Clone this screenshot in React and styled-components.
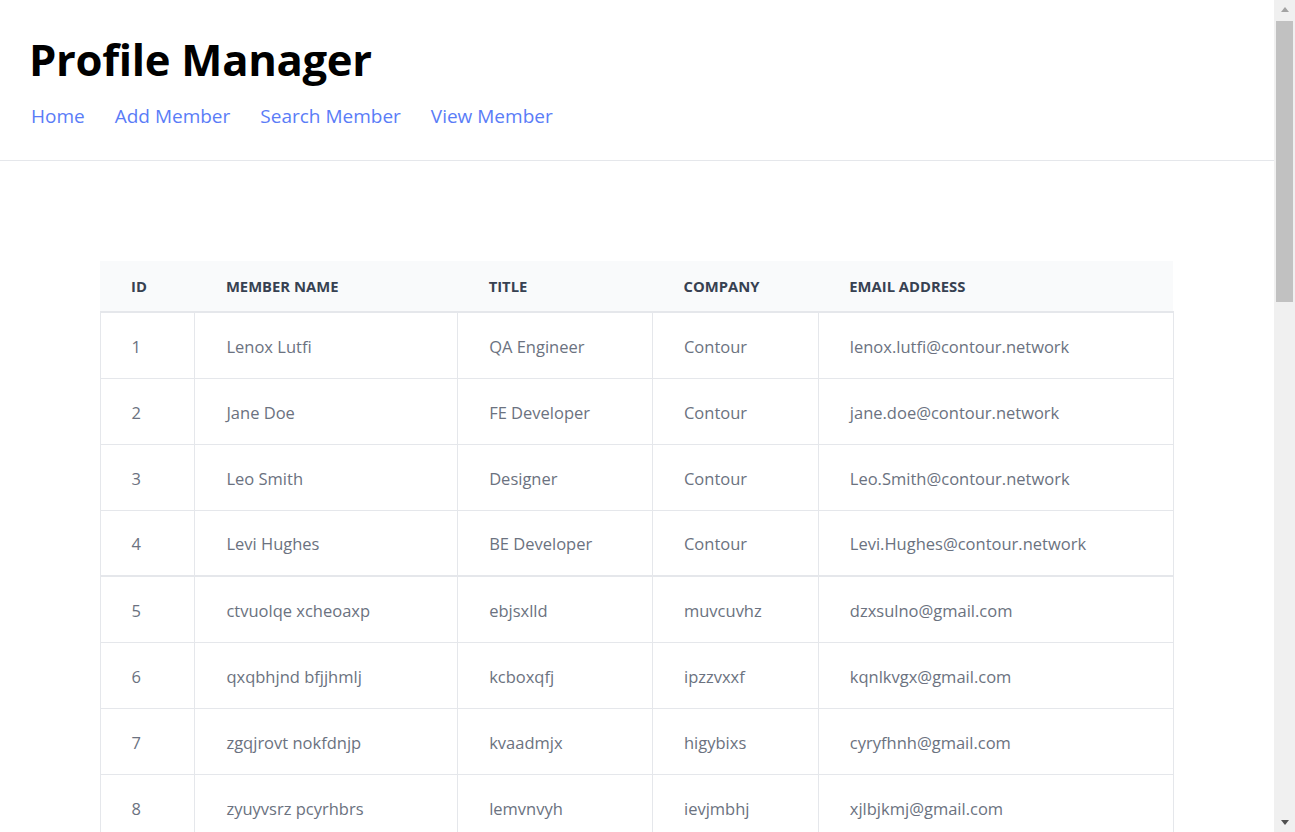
import React from 'react'
import styled, { createGlobalStyle } from 'styled-components'

const GlobalStyle = createGlobalStyle`
  html, body {
    margin: 0;
    padding: 0;
    background: #fff;
    font-family: "Open Sans", "Noto Sans", sans-serif;
  }
`

const Page = styled.div`
  display: flex;
  height: 100vh;
`

const Content = styled.div`
  flex: 1;
  min-width: 0;
  overflow: hidden;
`

const ScrollRail = styled.div`
  width: 21px;
  flex-shrink: 0;
  background: #f0f0f0;
  display: flex;
  flex-direction: column;
  align-items: center;
`

const ScrollButton = styled.div`
  height: 21px;
  width: 100%;
  display: flex;
  align-items: center;
  justify-content: center;
  margin-top: ${p => (p.$down ? 'auto' : '0')};

  &::after {
    content: '';
    width: 0;
    height: 0;
    border-left: 4.5px solid transparent;
    border-right: 4.5px solid transparent;
    ${p => (p.$down
      ? 'border-top: 5px solid #505050; margin-top: 2px;'
      : 'border-bottom: 5px solid #a3a3a3; margin-top: -3px;')}
  }
`

const Thumb = styled.div`
  width: 17px;
  height: 281px;
  background: #c1c1c1;
`

const Header = styled.header`
  padding: 30px 31px 0;
  height: 130px;
  border-bottom: 1px solid #e5e7eb;
`

const Title = styled.h1`
  margin: 0 0 0 -2px;
  font-size: 43.6px;
  line-height: 58px;
  font-weight: 700;
  color: #000;
  letter-spacing: -0.3px;
`

const Nav = styled.nav`
  display: flex;
  gap: 30px;
  margin-top: 14px;
`

const NavLink = styled.a`
  font-size: 19px;
  line-height: 28px;
  color: #5a7cf7;
  text-decoration: none;
  cursor: pointer;
`

const Main = styled.main`
  padding: 100px 0;
  display: flex;
  justify-content: center;
`

const Table = styled.table`
  width: 1074px;
  margin-left: -1px;
  border-collapse: collapse;
  font-size: 16px;
`

const HeadCell = styled.th`
  height: 51px;
  padding: 0 31px;
  text-align: left;
  font-size: 14.8px;
  font-weight: 700;
  color: #374151;
  background: #f9fafb;
  border-bottom: 2px solid #e5e7eb;
  width: ${p => p.$w}px;
  box-sizing: border-box;
`

const Row = styled.tr`
  border-bottom: ${p => (p.$split ? 2 : 1)}px solid #e5e7eb;
`

const Cell = styled.td`
  height: 66px;
  padding: 2px 31px 0;
  box-sizing: border-box;
  color: #6b7280;
  font-size: 16.5px;
  border-left: 1px solid #e5e7eb;
  border-right: 1px solid #e5e7eb;
  white-space: nowrap;
`

const columns = [
  { label: 'ID', w: 95 },
  { label: 'Member Name', w: 263 },
  { label: 'Title', w: 195 },
  { label: 'Company', w: 166 },
  { label: 'Email Address', w: 355 },
]

const members = [
  [1, 'Lenox Lutfi', 'QA Engineer', 'Contour', 'lenox.lutfi@contour.network'],
  [2, 'Jane Doe', 'FE Developer', 'Contour', 'jane.doe@contour.network'],
  [3, 'Leo Smith', 'Designer', 'Contour', 'Leo.Smith@contour.network'],
  [4, 'Levi Hughes', 'BE Developer', 'Contour', 'Levi.Hughes@contour.network'],
  [5, 'ctvuolqe xcheoaxp', 'ebjsxlld', 'muvcuvhz', 'dzxsulno@gmail.com'],
  [6, 'qxqbhjnd bfjjhmlj', 'kcboxqfj', 'ipzzvxxf', 'kqnlkvgx@gmail.com'],
  [7, 'zgqjrovt nokfdnjp', 'kvaadmjx', 'higybixs', 'cyryfhnh@gmail.com'],
  [8, 'zyuyvsrz pcyrhbrs', 'lemvnvyh', 'ievjmbhj', 'xjlbjkmj@gmail.com'],
  [9, 'wqkdhpzo mrtlvbaq', 'fnuxcehg', 'opqlsaxd', 'rbhzkyte@gmail.com'],
  [10, 'ljxavmke dqoprszu', 'gytbwnle', 'zcmrkvjo', 'hvtpqwxa@gmail.com'],
]

export default function App() {
  return (
    <Page>
      <GlobalStyle />
      <Content>
        <Header>
          <Title>Profile Manager</Title>
          <Nav>
            <NavLink>Home</NavLink>
            <NavLink>Add Member</NavLink>
            <NavLink>Search Member</NavLink>
            <NavLink>View Member</NavLink>
          </Nav>
        </Header>
        <Main>
          <Table>
            <thead>
              <tr>
                {columns.map(c => (
                  <HeadCell key={c.label} $w={c.w}>{c.label.toUpperCase()}</HeadCell>
                ))}
              </tr>
            </thead>
            <tbody>
              {members.map((m, i) => (
                <Row key={m[0]} $split={i === 3}>
                  {m.map((v, j) => (
                    <Cell key={j}>{v}</Cell>
                  ))}
                </Row>
              ))}
            </tbody>
          </Table>
        </Main>
      </Content>
      <ScrollRail>
        <ScrollButton />
        <Thumb />
        <ScrollButton $down />
      </ScrollRail>
    </Page>
  )
}
